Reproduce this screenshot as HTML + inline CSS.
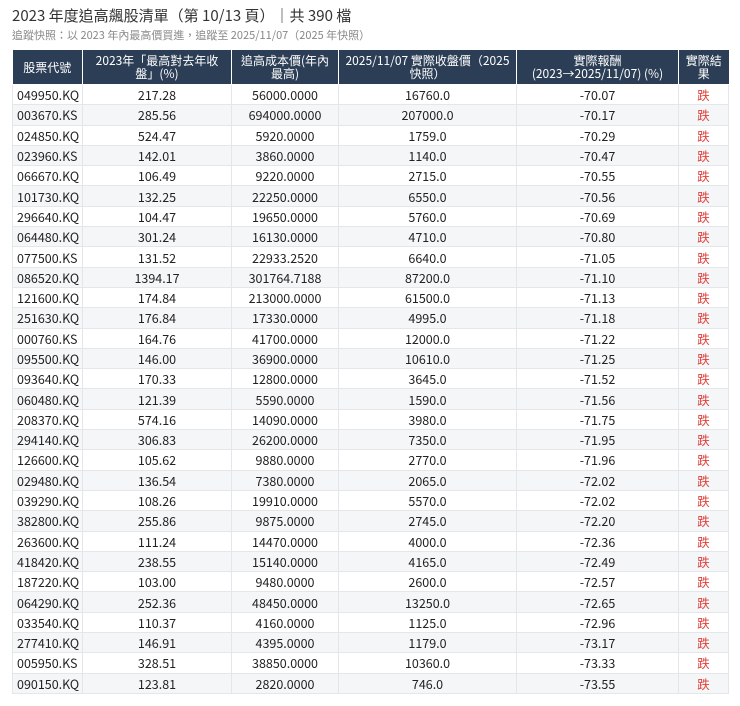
<!DOCTYPE html><html><head><meta charset="utf-8"><style>
body{margin:0;background:#fff;font-family:"Noto Sans CJK TC","Liberation Sans",sans-serif;color:#222;width:740px;height:706px;overflow:hidden}
h1{position:absolute;left:12px;top:6px;margin:0;font-size:15px;line-height:20px;font-weight:normal;color:#333;white-space:nowrap}
.sub{position:absolute;left:12px;top:28px;font-size:11px;line-height:14px;color:#888;white-space:nowrap}
table{position:absolute;left:12px;top:50px;border-collapse:collapse;width:716px;table-layout:fixed;font-size:12.5px}
th{background:#2c3e55;color:#fff;font-weight:normal;height:34px;line-height:13px;padding:0 2px;border:1px solid #fff;border-top:none;text-align:center;font-size:12px;overflow:hidden}
th:first-child{border-left:none}th:last-child{border-right:none}
td{height:19.3px;padding:0 4px;border:1px solid #e4e7ea;text-align:center;line-height:19px;overflow:hidden;white-space:nowrap}
td:first-child{text-align:left}
tr:nth-child(even) td{background:#f5f6f8}
td.d{color:#e0403a}
</style></head><body>
<h1>2023 年度追高飆股清單（第 10/13 頁）｜共 390 檔</h1>
<div class="sub">追蹤快照：以 2023 年內最高價買進，追蹤至 2025/11/07（2025 年快照）</div>
<table>
<colgroup><col style="width:70px"><col style="width:149px"><col style="width:107px"><col style="width:178px"><col style="width:162px"><col style="width:50px"></colgroup>
<thead><tr><th>股票代號</th><th>2023年「最高對去年收<br>盤」(%)</th><th>追高成本價(年內<br>最高)</th><th>2025/11/07 實際收盤價（2025<br>快照）</th><th>實際報酬<br>(2023→2025/11/07) (%)</th><th>實際結<br>果</th></tr></thead>
<tbody>
<tr><td>049950.KQ</td><td>217.28</td><td>56000.0000</td><td>16760.0</td><td>-70.07</td><td class="d">跌</td></tr>
<tr><td>003670.KS</td><td>285.56</td><td>694000.0000</td><td>207000.0</td><td>-70.17</td><td class="d">跌</td></tr>
<tr><td>024850.KQ</td><td>524.47</td><td>5920.0000</td><td>1759.0</td><td>-70.29</td><td class="d">跌</td></tr>
<tr><td>023960.KS</td><td>142.01</td><td>3860.0000</td><td>1140.0</td><td>-70.47</td><td class="d">跌</td></tr>
<tr><td>066670.KQ</td><td>106.49</td><td>9220.0000</td><td>2715.0</td><td>-70.55</td><td class="d">跌</td></tr>
<tr><td>101730.KQ</td><td>132.25</td><td>22250.0000</td><td>6550.0</td><td>-70.56</td><td class="d">跌</td></tr>
<tr><td>296640.KQ</td><td>104.47</td><td>19650.0000</td><td>5760.0</td><td>-70.69</td><td class="d">跌</td></tr>
<tr><td>064480.KQ</td><td>301.24</td><td>16130.0000</td><td>4710.0</td><td>-70.80</td><td class="d">跌</td></tr>
<tr><td>077500.KS</td><td>131.52</td><td>22933.2520</td><td>6640.0</td><td>-71.05</td><td class="d">跌</td></tr>
<tr><td>086520.KQ</td><td>1394.17</td><td>301764.7188</td><td>87200.0</td><td>-71.10</td><td class="d">跌</td></tr>
<tr><td>121600.KQ</td><td>174.84</td><td>213000.0000</td><td>61500.0</td><td>-71.13</td><td class="d">跌</td></tr>
<tr><td>251630.KQ</td><td>176.84</td><td>17330.0000</td><td>4995.0</td><td>-71.18</td><td class="d">跌</td></tr>
<tr><td>000760.KS</td><td>164.76</td><td>41700.0000</td><td>12000.0</td><td>-71.22</td><td class="d">跌</td></tr>
<tr><td>095500.KQ</td><td>146.00</td><td>36900.0000</td><td>10610.0</td><td>-71.25</td><td class="d">跌</td></tr>
<tr><td>093640.KQ</td><td>170.33</td><td>12800.0000</td><td>3645.0</td><td>-71.52</td><td class="d">跌</td></tr>
<tr><td>060480.KQ</td><td>121.39</td><td>5590.0000</td><td>1590.0</td><td>-71.56</td><td class="d">跌</td></tr>
<tr><td>208370.KQ</td><td>574.16</td><td>14090.0000</td><td>3980.0</td><td>-71.75</td><td class="d">跌</td></tr>
<tr><td>294140.KQ</td><td>306.83</td><td>26200.0000</td><td>7350.0</td><td>-71.95</td><td class="d">跌</td></tr>
<tr><td>126600.KQ</td><td>105.62</td><td>9880.0000</td><td>2770.0</td><td>-71.96</td><td class="d">跌</td></tr>
<tr><td>029480.KQ</td><td>136.54</td><td>7380.0000</td><td>2065.0</td><td>-72.02</td><td class="d">跌</td></tr>
<tr><td>039290.KQ</td><td>108.26</td><td>19910.0000</td><td>5570.0</td><td>-72.02</td><td class="d">跌</td></tr>
<tr><td>382800.KQ</td><td>255.86</td><td>9875.0000</td><td>2745.0</td><td>-72.20</td><td class="d">跌</td></tr>
<tr><td>263600.KQ</td><td>111.24</td><td>14470.0000</td><td>4000.0</td><td>-72.36</td><td class="d">跌</td></tr>
<tr><td>418420.KQ</td><td>238.55</td><td>15140.0000</td><td>4165.0</td><td>-72.49</td><td class="d">跌</td></tr>
<tr><td>187220.KQ</td><td>103.00</td><td>9480.0000</td><td>2600.0</td><td>-72.57</td><td class="d">跌</td></tr>
<tr><td>064290.KQ</td><td>252.36</td><td>48450.0000</td><td>13250.0</td><td>-72.65</td><td class="d">跌</td></tr>
<tr><td>033540.KQ</td><td>110.37</td><td>4160.0000</td><td>1125.0</td><td>-72.96</td><td class="d">跌</td></tr>
<tr><td>277410.KQ</td><td>146.91</td><td>4395.0000</td><td>1179.0</td><td>-73.17</td><td class="d">跌</td></tr>
<tr><td>005950.KS</td><td>328.51</td><td>38850.0000</td><td>10360.0</td><td>-73.33</td><td class="d">跌</td></tr>
<tr><td>090150.KQ</td><td>123.81</td><td>2820.0000</td><td>746.0</td><td>-73.55</td><td class="d">跌</td></tr>
</tbody></table>
</body></html>
